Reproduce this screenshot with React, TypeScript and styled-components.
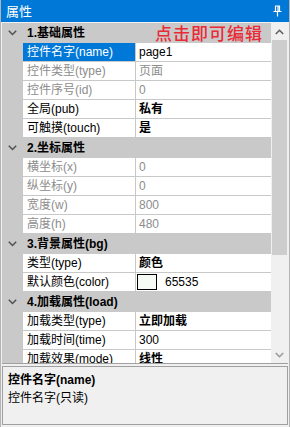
import { createGlobalStyle } from "styled-components";
import styled from "styled-components";

const GlobalStyle = createGlobalStyle`
  html, body {
    margin: 0;
    padding: 0;
    background: #ffffff;
  }
  body {
    font-family: "Liberation Sans", "Noto Sans CJK SC", sans-serif;
    font-size: 12px;
    color: #000;
  }
`;

const Panel = styled.div`
  width: 290px;
  height: 427px;
  display: flex;
  flex-direction: column;
  background: #f0f0f0;
  box-sizing: border-box;
  border-left: 1px solid #b4b4b4;
  border-right: 1px solid #b4b4b4;
  overflow: hidden;
`;

const TitleBar = styled.div`
  height: 22px;
  flex: 0 0 22px;
  margin: 0 -1px;
  background: #0078d7;
  color: #fff;
  display: flex;
  align-items: center;
  justify-content: space-between;
  padding: 0 8px 0 6px;
  font-family: "Noto Sans CJK SC", sans-serif;
  font-size: 13px;
  line-height: 22px;
`;

const GridFrame = styled.div`
  flex: 0 0 340px;
  display: flex;
  margin: 1px 1px 0 1px;
  border-bottom: 1px solid #a0a0a0;
  background: #fff;
  overflow: hidden;
`;

const Grid = styled.div`
  flex: 1;
  display: flex;
  flex-direction: column;
  overflow: hidden;
`;

const CategoryRow = styled.div`
  flex: 0 0 20px;
  height: 20px;
  display: flex;
  align-items: center;
  background: #c9c9c9;
  font-weight: bold;
  line-height: 20px;
`;

const Chevron = styled.span`
  width: 21px;
  display: flex;
  justify-content: center;
  align-items: center;
  margin-right: 4px;
`;

const Annotation = styled.span`
  margin-left: auto;
  margin-right: 8px;
  color: #ea2a35;
  font-family: "Noto Sans CJK SC", sans-serif;
  font-size: 17px;
  font-weight: 500;
  letter-spacing: 1px;
  line-height: 20px;
  white-space: nowrap;
`;

const PropRow = styled.div`
  flex: 0 0 19px;
  height: 19px;
  display: flex;
  background: #c9c9c9;
`;

const NameCell = styled.div<{ $selected?: boolean; $readonly?: boolean }>`
  width: 113px;
  margin-left: 21px;
  box-sizing: border-box;
  padding-left: 4px;
  border-bottom: 1px solid #c8c8c8;
  border-right: 1px solid #c8c8c8;
  background: ${(p) => (p.$selected ? "#0078d7" : "#fff")};
  color: ${(p) => (p.$selected ? "#fff" : p.$readonly ? "#8d8d8d" : "#000")};
  line-height: 18px;
  white-space: nowrap;
  overflow: hidden;
`;

const ValueCell = styled.div<{ $bold?: boolean; $readonly?: boolean }>`
  flex: 1;
  display: flex;
  align-items: center;
  padding-left: 3px;
  border-bottom: 1px solid #c8c8c8;
  background: #fff;
  color: ${(p) => (p.$readonly ? "#8d8d8d" : "#000")};
  font-weight: ${(p) => (p.$bold ? "bold" : "normal")};
  line-height: 18px;
  white-space: nowrap;
  overflow: hidden;
`;

const Swatch = styled.span`
  width: 18px;
  height: 14px;
  margin-left: -2px;
  border: 1px solid #000;
  background: #f6fbf6;
  margin-right: 8px;
`;

const ScrollBar = styled.div`
  flex: 0 0 17px;
  display: flex;
  flex-direction: column;
  background: #f0f0f0;
`;

const ScrollArrow = styled.div`
  height: 17px;
  flex: 0 0 17px;
  display: flex;
  align-items: center;
  justify-content: center;
`;

const Thumb = styled.div`
  height: 215px;
  margin: 0 1px;
  background: #cdcdcd;
`;

const ScrollSpace = styled.div`
  flex: 1;
`;

const Description = styled.div`
  flex: 1;
  margin: 2px 1px 2px 1px;
  border: 1px solid #a0a0a0;
  background: #f0f0f0;
  padding: 4px 5px;
  line-height: 18px;
`;

const DescTitle = styled.div`
  font-weight: bold;
`;

type Prop = {
  name: string;
  value: string;
  readonly?: boolean;
  bold?: boolean;
  selected?: boolean;
  swatch?: boolean;
};

type Category = { title: string; note?: string; props: Prop[] };

const data: Category[] = [
  {
    title: "1.基础属性",
    note: "点击即可编辑",
    props: [
      { name: "控件名字(name)", value: "page1", selected: true },
      { name: "控件类型(type)", value: "页面", readonly: true },
      { name: "控件序号(id)", value: "0", readonly: true },
      { name: "全局(pub)", value: "私有", bold: true },
      { name: "可触摸(touch)", value: "是", bold: true },
    ],
  },
  {
    title: "2.坐标属性",
    props: [
      { name: "横坐标(x)", value: "0", readonly: true },
      { name: "纵坐标(y)", value: "0", readonly: true },
      { name: "宽度(w)", value: "800", readonly: true },
      { name: "高度(h)", value: "480", readonly: true },
    ],
  },
  {
    title: "3.背景属性(bg)",
    props: [
      { name: "类型(type)", value: "颜色", bold: true },
      { name: "默认颜色(color)", value: "65535", swatch: true },
    ],
  },
  {
    title: "4.加载属性(load)",
    props: [
      { name: "加载类型(type)", value: "立即加载", bold: true },
      { name: "加载时间(time)", value: "300" },
      { name: "加载效果(mode)", value: "线性", bold: true },
    ],
  },
];

function ChevronDown() {
  return (
    <svg width="9" height="6" viewBox="0 0 9 6">
      <path d="M0.8 0.8 L4.5 4.5 L8.2 0.8" fill="none" stroke="#505050" strokeWidth="1.5" />
    </svg>
  );
}

function PinIcon() {
  return (
    <svg width="9" height="12" viewBox="0 0 9 12">
      <path d="M2 1 H7 M2.5 1 V6 M6.5 1 V6 M0.5 6.5 H8.5 M4.5 6.5 V11.5 M5 1 V6" fill="none" stroke="#fff" strokeWidth="1.2" />
    </svg>
  );
}

function Arrow({ up }: { up?: boolean }) {
  return (
    <svg width="9" height="6" viewBox="0 0 9 6">
      <path
        d={up ? "M0.8 5 L4.5 1.3 L8.2 5" : "M0.8 1 L4.5 4.7 L8.2 1"}
        fill="none"
        stroke={up ? "#606060" : "#9a9a9a"}
        strokeWidth="1.6"
      />
    </svg>
  );
}

export default function App() {
  return (
    <>
      <GlobalStyle />
      <Panel>
        <TitleBar>
          <span>属性</span>
          <PinIcon />
        </TitleBar>
        <GridFrame>
          <Grid>
            {data.map((cat) => (
              <div key={cat.title} style={{ display: "contents" }}>
                <CategoryRow>
                  <Chevron>
                    <ChevronDown />
                  </Chevron>
                  {cat.title}
                  {cat.note && <Annotation>{cat.note}</Annotation>}
                </CategoryRow>
                {cat.props.map((p) => (
                  <PropRow key={p.name}>
                    <NameCell $selected={p.selected} $readonly={p.readonly}>
                      {p.name}
                    </NameCell>
                    <ValueCell $bold={p.bold} $readonly={p.readonly}>
                      {p.swatch && <Swatch />}
                      {p.value}
                    </ValueCell>
                  </PropRow>
                ))}
              </div>
            ))}
          </Grid>
          <ScrollBar>
            <ScrollArrow>
              <Arrow up />
            </ScrollArrow>
            <Thumb />
            <ScrollSpace />
            <ScrollArrow>
              <Arrow />
            </ScrollArrow>
          </ScrollBar>
        </GridFrame>
        <Description>
          <DescTitle>控件名字(name)</DescTitle>
          <div>控件名字(只读)</div>
        </Description>
      </Panel>
    </>
  );
}
